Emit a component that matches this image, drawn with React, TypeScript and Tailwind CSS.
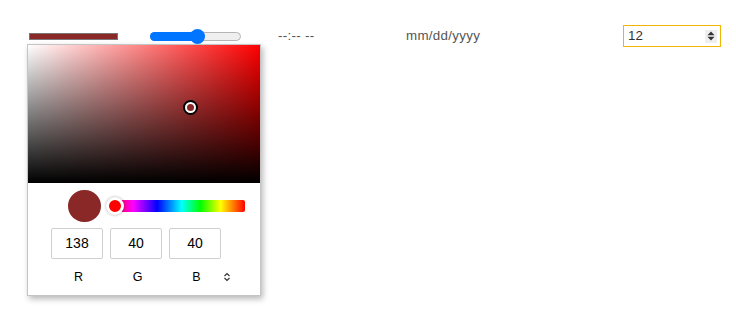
import React from 'react';

const font = { fontFamily: '"Liberation Sans", Arial, sans-serif' };

function ColorPopup() {
  return (
    <div className="absolute left-[27px] top-[44px] w-[234px] border border-[#c4c4c4] bg-white shadow-[2px_3px_6px_rgba(0,0,0,0.28)]">
      {/* saturation / value area */}
      <div className="relative h-[138px] w-full bg-[linear-gradient(to_right,#ffffff,#ff0000)]">
        <div className="absolute inset-0 bg-[linear-gradient(to_top,#000000,rgba(0,0,0,0))]" />
        <div className="absolute left-[155px] top-[55px] h-[15px] w-[15px] rounded-full border-2 border-black bg-white p-[2px]">
          <div className="h-full w-full rounded-full bg-[#8a2828]" />
        </div>
      </div>

      <div className="flex items-center pl-[40px] pt-[7px]">
        <div className="h-[32px] w-[33px] rounded-full bg-[#8a2828]" />
        <div className="relative ml-[9px] h-[12px] w-[135px] rounded-[2px] bg-[linear-gradient(to_right,#ff0000,#ff00ff_17%,#0000ff_35%,#00ffff_53%,#00ff00_67%,#ffff00_82%,#ff0000)]">
          <div className="absolute left-[-4px] top-[-3px] h-[18px] w-[18px] rounded-full border-[3px] border-white bg-[#ff0000] shadow-[0_0_3px_rgba(0,0,0,0.35)]" />
        </div>
      </div>

      <div className="mt-[6px] flex gap-[7px] pl-[23px]">
        {['138', '40', '40'].map((v, i) => (
          <div
            key={i}
            className="flex h-[31px] w-[52px] items-center justify-center rounded-[2px] border border-[#cfcfcf] text-[14px] text-black"
          >
            {v}
          </div>
        ))}
      </div>

      <div className="flex h-[36px] items-center pl-[21px] text-[12.5px] text-black">
        {['R', 'G', 'B'].map((l) => (
          <div key={l} className="w-[59px] text-center">
            {l}
          </div>
        ))}
        <svg width="8" height="10" viewBox="0 0 8 10" className="ml-[-3px]">
          <path d="M1.5 4 L4 1.5 L6.5 4 M1.5 6 L4 8.5 L6.5 6" fill="none" stroke="#333" strokeWidth="1.2" />
        </svg>
      </div>
    </div>
  );
}

export default function App() {
  return (
    <div className="relative h-[319px] w-[736px] bg-white pt-[25px]" style={font}>
      <div className="flex h-[22px] items-center text-[13.33px]">
        <div className="ml-[29px] h-[7px] w-[89px] border border-[#777] bg-[#8a2828]" />

        <div className="relative ml-[32px] h-[9px] w-[91px] rounded-full border border-[#b5b5b5] bg-[#efefef]">
          <div className="absolute left-[-1px] top-[-1px] h-[9px] w-[46px] rounded-l-full bg-[#0075ff]" />
          <div className="absolute left-[39px] top-[-4px] h-[15px] w-[15px] rounded-full bg-[#0075ff]" />
        </div>

        <div className="ml-[37px] w-[128px] tracking-[0.3px] text-[#555]">--:-- --</div>
        <div className="w-[217px] tracking-[0.3px] text-[#555]">mm/dd/yyyy</div>

        <div className="flex h-[22px] w-[98px] items-center justify-between border border-[#f2b600] pl-[4px] pr-[3px] text-[#333]">
          <span>12</span>
          <div className="flex h-[13px] w-[12px] items-center justify-center bg-[#efefef]">
            <svg width="8" height="10" viewBox="0 0 8 10">
              <path d="M4 0.5 L7.5 4.2 L0.5 4.2 Z M4 9.5 L7.5 5.8 L0.5 5.8 Z" fill="#333" />
            </svg>
          </div>
        </div>
      </div>

      <ColorPopup />
    </div>
  );
}
